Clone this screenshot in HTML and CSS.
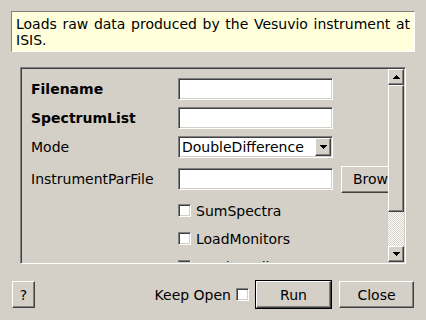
FILE: index.html
```html
<!DOCTYPE html>
<html lang="en">
<head>
  <meta charset="UTF-8" />
  <meta name="viewport" content="width=device-width, initial-scale=1" />
  <title>LoadVesuvio</title>
  <link rel="stylesheet" href="styles.css">
</head>
<body>
  <div class="dialog">
    <p class="summary">Loads raw data produced by the Vesuvio instrument at ISIS.</p>

    <div class="props">
      <div class="props-body">
        <div class="prop-grid">
          <label class="prop-label req" for="filename">Filename</label>
          <input class="field" type="text" id="filename" />
          <span></span>

          <label class="prop-label req" for="spectra">SpectrumList</label>
          <input class="field" type="text" id="spectra" />
          <span></span>

          <label class="prop-label">Mode</label>
          <div class="combo">
            <span class="combo-text">DoubleDifference</span>
            <span class="combo-btn raised">
              <svg width="7" height="4" viewBox="0 0 7 4"><path d="M0 0h7v1h-7zM1 1h5v1h-5zM2 2h3v1h-3zM3 3h1v1h-1z" fill="#000"/></svg>
            </span>
          </div>
          <span></span>

          <label class="prop-label" for="parfile">InstrumentParFile</label>
          <input class="field" type="text" id="parfile" />
          <button class="btn raised browse" type="button">Browse</button>

          <label class="check-row"><input class="check" type="checkbox" /> SumSpectra</label>
          <label class="check-row"><input class="check" type="checkbox" /> LoadMonitors</label>
          <label class="check-row"><input class="check" type="checkbox" /> LoadLogFiles</label>
        </div>
      </div>

      <!-- scrollbar drawn by hand -->
      <div class="vscroll">
        <div class="sb-btn raised">
          <svg width="7" height="4" viewBox="0 0 7 4"><path d="M3 0h1v1h-1zM2 1h3v1h-3zM1 2h5v1h-5zM0 3h7v1h-7z" fill="#000"/></svg>
        </div>
        <div class="sb-thumb raised"></div>
        <div class="sb-trough"></div>
        <div class="sb-btn raised">
          <svg width="7" height="4" viewBox="0 0 7 4"><path d="M0 0h7v1h-7zM1 1h5v1h-5zM2 2h3v1h-3zM3 3h1v1h-1z" fill="#000"/></svg>
        </div>
      </div>
    </div>

    <div class="actions">
      <button class="btn raised help" type="button">?</button>
      <span class="spacer"></span>
      <label class="keep">Keep Open <input class="check" type="checkbox" /></label>
      <button class="btn raised default" type="button">Run</button>
      <button class="btn raised close" type="button">Close</button>
    </div>
  </div>
</body>
</html>
```

FILE: styles.css
```css
body {
  margin: 0;
  background: #d4d0c8;
  font-family: "DejaVu Sans", sans-serif;
  font-size: 14px;
  color: #000;
}
.dialog {
  height: 320px;
  box-sizing: border-box;
  padding: 11px;
  display: flex;
  flex-direction: column;
}
.summary {
  margin: 0;
  height: 41px;
  box-sizing: border-box;
  padding: 4px 4px 3px;
  background: #ffffdc;
  border: 1px solid;
  border-color: #808080 #fff #fff #808080;
  line-height: 16px;
  text-align: justify;
}

/* sunken frame with the property list */
.props {
  margin: 15px 9px 0;
  height: 197px;
  box-sizing: border-box;
  padding: 1px;
  display: flex;
  border: 1px solid;
  border-color: #808080 #fff #fff #808080;
  box-shadow: inset 1px 1px #404040, inset -1px -1px #d4d0c8;
}
.props-body {
  flex: 1;
  overflow: hidden;
}
.prop-grid {
  display: grid;
  grid-template-columns: 139px 155px max-content;
  grid-template-rows: 22px 22px 22px 28px 21px 21px 21px;
  column-gap: 8px;
  row-gap: 7px;
  align-items: center;
  padding: 9px 0 0 9px;
}
.prop-label {
  white-space: nowrap;
}
.req {
  font-weight: bold;
}
.field {
  width: 155px;
  height: 22px;
  box-sizing: border-box;
  margin: 0;
  padding: 0 3px;
  font: inherit;
  background: #fff;
  border: 1px solid;
  border-color: #808080 #fff #fff #808080;
  box-shadow: inset 1px 1px #404040, inset -1px -1px #d4d0c8;
  outline: none;
}
.combo {
  display: flex;
  width: 155px;
  height: 22px;
  box-sizing: border-box;
  padding: 1px;
  background: #fff;
  border: 1px solid;
  border-color: #808080 #fff #fff #808080;
  box-shadow: inset 1px 1px #404040, inset -1px -1px #d4d0c8;
}
.combo-text {
  flex: 1;
  padding-left: 2px;
  line-height: 18px;
  white-space: nowrap;
  overflow: hidden;
}
.combo-btn {
  width: 16px;
  display: flex;
  align-items: center;
  justify-content: center;
  box-sizing: border-box;
  background: #d4d0c8;
}
.raised {
  border: 1px solid;
  border-color: #fff #404040 #404040 #fff;
  box-shadow: inset -1px -1px #808080;
}
.btn {
  box-sizing: border-box;
  margin: 0;
  padding: 0;
  background: #d4d0c8;
  font: inherit;
  color: #000;
}
.browse {
  width: 75px;
  height: 27px;
}
.check-row {
  grid-column: 2 / span 2;
  display: flex;
  align-items: center;
  gap: 5px;
  white-space: nowrap;
}
.check {
  appearance: none;
  width: 13px;
  height: 13px;
  margin: 0;
  flex: none;
  background: #fff;
  border: 1px solid;
  border-color: #808080 #fff #fff #808080;
  box-shadow: inset 1px 1px #404040, inset -1px -1px #d4d0c8;
}

/* scrollbar */
.vscroll {
  width: 16px;
  display: flex;
  flex-direction: column;
}
.sb-btn {
  height: 16px;
  box-sizing: border-box;
  display: flex;
  align-items: center;
  justify-content: center;
}
.sb-thumb {
  height: 127px;
  box-sizing: border-box;
}
.sb-trough {
  flex: 1;
  background: repeating-conic-gradient(#fff 0 25%, #d4d0c8 0 50%) 0 0 / 2px 2px;
}

/* button row */
.actions {
  display: flex;
  align-items: center;
  height: 29px;
  margin-top: 16px;
  padding: 0 1px;
}
.help {
  width: 23px;
  height: 27px;
}
.spacer {
  flex: 1;
}
.keep {
  display: flex;
  align-items: center;
  gap: 5px;
}
.default {
  width: 75px;
  height: 27px;
  margin: 1px 1px 1px 7px;
  outline: 1px solid #000;
}
.close {
  width: 75px;
  height: 27px;
  margin-left: 7px;
}
```
